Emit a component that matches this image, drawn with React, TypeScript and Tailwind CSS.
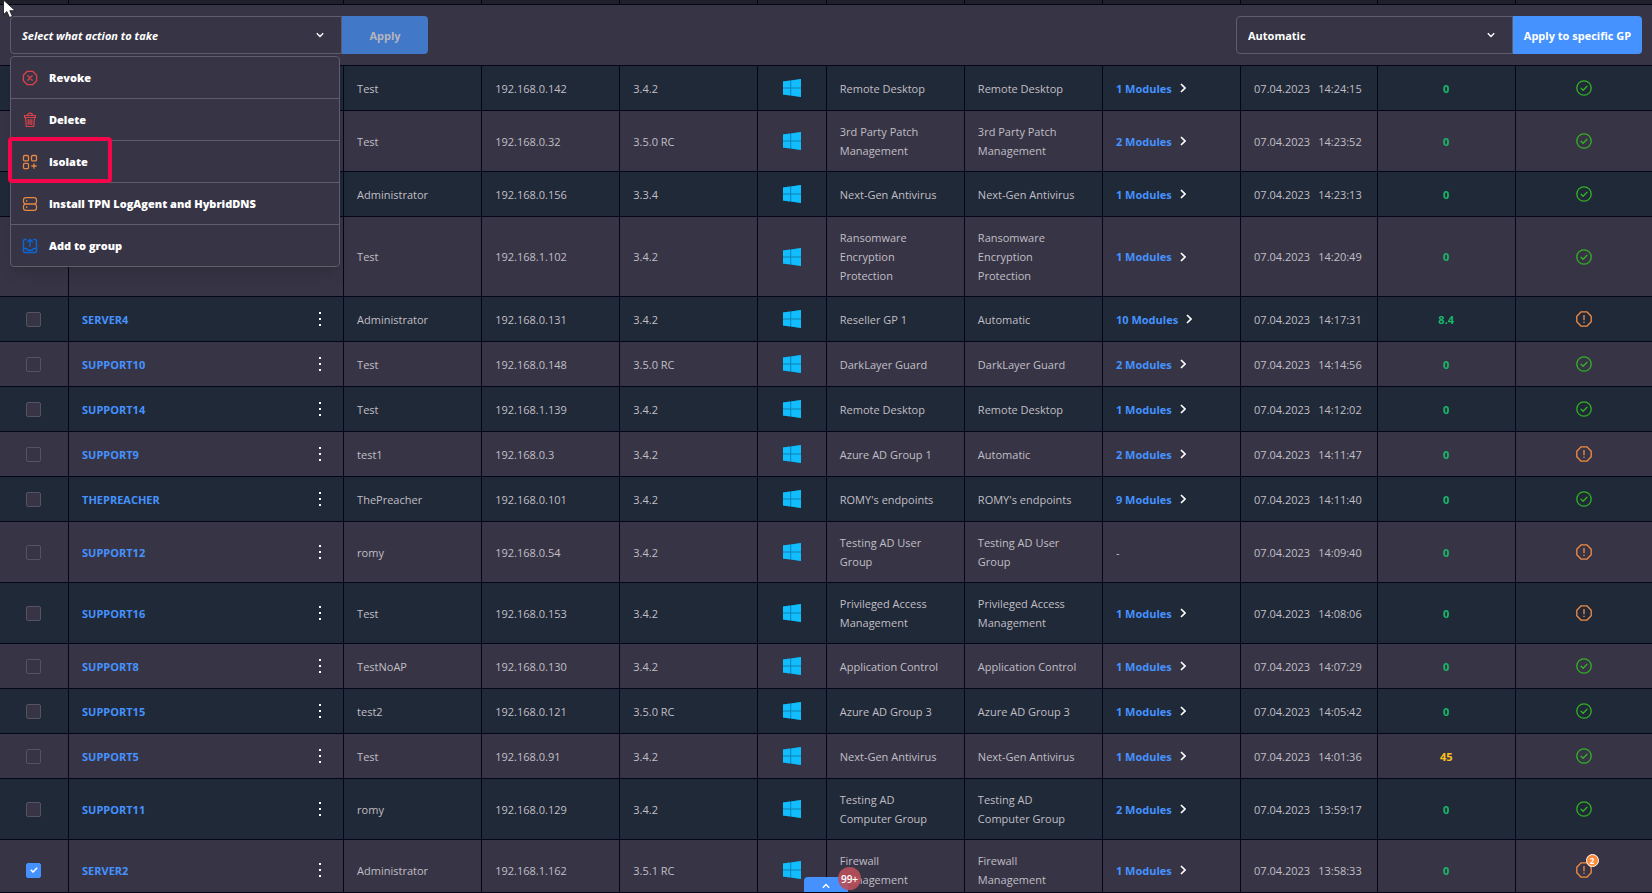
import { useState } from 'react';

type Status = 'ok' | 'warn';

type Endpoint = {
  host: string;
  user: string;
  ip: string;
  version: string;
  current: string;
  assigned: string;
  modules: number;
  time: string;
  risk: string;
  status: Status;
  alerts?: number;
};

const ENDPOINTS: Endpoint[] = [
  { host: '', user: 'Test', ip: '192.168.0.142', version: '3.4.2', current: 'Remote Desktop', assigned: 'Remote Desktop', modules: 1, time: '14:24:15', risk: '0', status: 'ok' },
  { host: '', user: 'Test', ip: '192.168.0.32', version: '3.5.0 RC', current: '3rd Party Patch Management', assigned: '3rd Party Patch Management', modules: 2, time: '14:23:52', risk: '0', status: 'ok' },
  { host: '', user: 'Administrator', ip: '192.168.0.156', version: '3.3.4', current: 'Next-Gen Antivirus', assigned: 'Next-Gen Antivirus', modules: 1, time: '14:23:13', risk: '0', status: 'ok' },
  { host: '', user: 'Test', ip: '192.168.1.102', version: '3.4.2', current: 'Ransomware Encryption Protection', assigned: 'Ransomware Encryption Protection', modules: 1, time: '14:20:49', risk: '0', status: 'ok' },
  { host: 'SERVER4', user: 'Administrator', ip: '192.168.0.131', version: '3.4.2', current: 'Reseller GP 1', assigned: 'Automatic', modules: 10, time: '14:17:31', risk: '8.4', status: 'warn' },
  { host: 'SUPPORT10', user: 'Test', ip: '192.168.0.148', version: '3.5.0 RC', current: 'DarkLayer Guard', assigned: 'DarkLayer Guard', modules: 2, time: '14:14:56', risk: '0', status: 'ok' },
  { host: 'SUPPORT14', user: 'Test', ip: '192.168.1.139', version: '3.4.2', current: 'Remote Desktop', assigned: 'Remote Desktop', modules: 1, time: '14:12:02', risk: '0', status: 'ok' },
  { host: 'SUPPORT9', user: 'test1', ip: '192.168.0.3', version: '3.4.2', current: 'Azure AD Group 1', assigned: 'Automatic', modules: 2, time: '14:11:47', risk: '0', status: 'warn' },
  { host: 'THEPREACHER', user: 'ThePreacher', ip: '192.168.0.101', version: '3.4.2', current: "ROMY's endpoints", assigned: "ROMY's endpoints", modules: 9, time: '14:11:40', risk: '0', status: 'ok' },
  { host: 'SUPPORT12', user: 'romy', ip: '192.168.0.54', version: '3.4.2', current: 'Testing AD User Group', assigned: 'Testing AD User Group', modules: 0, time: '14:09:40', risk: '0', status: 'warn' },
  { host: 'SUPPORT16', user: 'Test', ip: '192.168.0.153', version: '3.4.2', current: 'Privileged Access Management', assigned: 'Privileged Access Management', modules: 1, time: '14:08:06', risk: '0', status: 'warn' },
  { host: 'SUPPORT8', user: 'TestNoAP', ip: '192.168.0.130', version: '3.4.2', current: 'Application Control', assigned: 'Application Control', modules: 1, time: '14:07:29', risk: '0', status: 'ok' },
  { host: 'SUPPORT15', user: 'test2', ip: '192.168.0.121', version: '3.5.0 RC', current: 'Azure AD Group 3', assigned: 'Azure AD Group 3', modules: 1, time: '14:05:42', risk: '0', status: 'ok' },
  { host: 'SUPPORT5', user: 'Test', ip: '192.168.0.91', version: '3.4.2', current: 'Next-Gen Antivirus', assigned: 'Next-Gen Antivirus', modules: 1, time: '14:01:36', risk: '45', status: 'ok' },
  { host: 'SUPPORT11', user: 'romy', ip: '192.168.0.129', version: '3.4.2', current: 'Testing AD Computer Group', assigned: 'Testing AD Computer Group', modules: 2, time: '13:59:17', risk: '0', status: 'ok' },
  { host: 'SERVER2', user: 'Administrator', ip: '192.168.1.162', version: '3.5.1 RC', current: 'Firewall Management', assigned: 'Firewall Management', modules: 1, time: '13:58:33', risk: '0', status: 'warn', alerts: 2 },
];

const COLUMNS = [
  { label: 'Select', width: 'w-[4.18%]' },
  { label: 'Hostname', width: 'w-[16.65%]' },
  { label: 'Username', width: 'w-[8.36%]' },
  { label: 'IP address', width: 'w-[8.36%]' },
  { label: 'Agent version', width: 'w-[8.36%]' },
  { label: 'Operating system', width: 'w-[4.14%]' },
  { label: 'Current GP', width: 'w-[8.36%]' },
  { label: 'Assigned GP', width: 'w-[8.36%]' },
  { label: 'Modules', width: 'w-[8.36%]' },
  { label: 'Last seen', width: 'w-[8.3%]' },
  { label: 'Risk score', width: 'w-[8.36%]' },
  { label: 'Status', width: 'w-auto' },
];

function RevokeIcon() {
  return (
    <svg viewBox="0 0 16 16" className="size-4 text-[#d8434b]" fill="none" stroke="currentColor" strokeWidth="1.3" strokeLinecap="round" strokeLinejoin="round">
      <path d="M5.3 1.3h5.4l3.9 3.9v5.6l-3.9 3.9H5.3l-3.9-3.9V5.2z" />
      <path d="M5.8 5.8l4.4 4.4M10.2 5.8l-4.4 4.4" />
    </svg>
  );
}

function DeleteIcon() {
  return (
    <svg viewBox="0 0 16 16" className="size-4 text-[#d8434b]" fill="none" stroke="currentColor" strokeWidth="1.2" strokeLinecap="round" strokeLinejoin="round">
      <path d="M2.5 3.5h11v2h-11zM5.5 3.3c0-2.8 5-2.8 5 0" />
      <path d="M3.5 5.7l.8 8.8h7.4l.8-8.8M6.2 7.5v5M8 7.5v5M9.8 7.5v5" />
    </svg>
  );
}

function IsolateIcon() {
  return (
    <svg viewBox="0 0 16 16" className="size-4 text-[#e8873f]" fill="none" stroke="currentColor" strokeWidth="1.3" strokeLinecap="round">
      <rect x="1.5" y="1.5" width="5" height="5.4" rx="1.2" />
      <rect x="9.5" y="1.5" width="5" height="5.4" rx="1.2" />
      <rect x="1.5" y="9.3" width="5" height="5.4" rx="1.2" />
      <path d="M12 9.8v4.4M9.8 12h4.4" />
    </svg>
  );
}

function InstallIcon() {
  return (
    <svg viewBox="0 0 16 16" className="size-4 text-[#e8873f]" fill="none" stroke="currentColor" strokeWidth="1.2" strokeLinecap="round">
      <rect x="1.5" y="1.7" width="13" height="6.3" rx="2.4" />
      <rect x="1.5" y="8" width="13" height="6.3" rx="2.4" />
      <path d="M4.7 4.4v.9M4.7 10.7v.9" />
    </svg>
  );
}

function GroupIcon() {
  return (
    <svg viewBox="0 0 16 16" className="size-4 text-[#0b66d8]" fill="none" stroke="currentColor" strokeWidth="1.4" strokeLinecap="round" strokeLinejoin="round">
      <path d="M4.2 1.5H2.8a1.3 1.3 0 0 0-1.3 1.3v10.4a1.3 1.3 0 0 0 1.3 1.3h10.4a1.3 1.3 0 0 0 1.3-1.3V2.8a1.3 1.3 0 0 0-1.3-1.3h-1.4" />
      <path d="M8 8.5V1.4M5.6 3.7L8 1.4l2.4 2.3M1.5 10.5h3l1.3 1.7h4.4l1.3-1.7h3" />
    </svg>
  );
}

const ACTIONS = [
  { label: 'Revoke', icon: <RevokeIcon /> },
  { label: 'Delete', icon: <DeleteIcon /> },
  { label: 'Isolate', icon: <IsolateIcon />, highlighted: true },
  { label: 'Install TPN LogAgent and HybridDNS', icon: <InstallIcon /> },
  { label: 'Add to group', icon: <GroupIcon /> },
];

function Chevron({ className }: { className: string }) {
  return (
    <svg viewBox="0 0 8 6" className={className} fill="none" stroke="currentColor" strokeWidth="1.4">
      <path d="M.8 1.2L4 4.4l3.2-3.2" />
    </svg>
  );
}

function WindowsIcon() {
  return (
    <svg viewBox="0 0 18 18" className="mx-auto h-[18px] w-[18px]" role="img" aria-label="Windows">
      <path d="M0 2.6L18 0v18L0 15.4z" fill="#0f80b0" />
      <path d="M0 2.6L7.2 1.6v6.9H0zM8.2 1.4L18 0v8.5H8.2zM0 9.5h7.2v6.9L0 15.4zM8.2 9.5H18V18l-9.8-1.4z" fill="#10bdff" />
    </svg>
  );
}

function StatusIcon({ status, alerts }: { status: Status; alerts?: number }) {
  if (status === 'ok') {
    return (
      <svg viewBox="0 0 16 16" className="mx-auto size-4 text-[#33b324]" fill="none" stroke="currentColor" strokeWidth="1.3" strokeLinecap="round" strokeLinejoin="round" role="img" aria-label="Up to date">
        <circle cx="8" cy="8" r="7.2" />
        <path d="M5 8.3l2.1 2 3.9-4" />
      </svg>
    );
  }
  return (
    <div className="relative mx-auto size-4">
      <svg viewBox="0 0 16 16" className="size-4 text-[#f28d45]" fill="none" stroke="currentColor" strokeWidth="1.3" strokeLinejoin="round" role="img" aria-label="Needs attention">
        <path d="M5.2.8h5.6l4.4 4.4v5.6l-4.4 4.4H5.2L.8 10.8V5.2z" />
        <path d="M8 4v5.2M8 10.8v1.2" />
      </svg>
      {alerts ? (
        <span className="absolute -top-2 left-2.5 flex size-[13px] items-center justify-center rounded-full border border-white bg-[#ff8c3a] text-[8px] leading-none font-bold text-white">
          {alerts}
        </span>
      ) : null}
    </div>
  );
}

function ActionPicker() {
  const [open, setOpen] = useState(true);

  return (
    <div className="flex">
      <div className="relative w-[332px]">
        <button
          type="button"
          aria-haspopup="menu"
          aria-expanded={open}
          onClick={() => setOpen(!open)}
          className="flex h-[38px] w-full items-center justify-between rounded-l-sm border border-[#5f5d6c] pr-[17px] pl-[11px] font-bold text-white italic"
        >
          Select what action to take
          <Chevron className="h-1.5 w-2" />
        </button>
        {open && (
          <ul role="menu" className="absolute top-10 left-0 z-10 w-[330px] rounded-sm border border-[#5f5d6c] bg-[#373545] shadow-lg">
            {ACTIONS.map((a) => (
              <li key={a.label} role="none" className="relative border-b border-[#5f5d6c] last:border-b-0">
                <button type="button" role="menuitem" className="flex h-[41px] w-full items-center gap-[11px] px-[11px] text-left font-extrabold text-white">
                  {a.icon}
                  {a.label}
                </button>
                {a.highlighted && (
                  <span className="pointer-events-none absolute -top-1 -left-[3px] h-[46px] w-[104px] rounded border-4 border-[#f5064b]" />
                )}
              </li>
            ))}
          </ul>
        )}
      </div>
      <button type="button" className="w-[86px] rounded-r-sm bg-[#4178c8] font-bold text-[#b4b4bd]">
        Apply
      </button>
    </div>
  );
}

function PolicyPicker() {
  return (
    <div className="flex">
      <div className="relative w-[277px]">
        <select
          aria-label="Group policy"
          className="h-[38px] w-full appearance-none rounded-l-sm border border-[#5f5d6c] bg-[#373545] px-[11px] font-bold text-white"
        >
          <option>Automatic</option>
        </select>
        <Chevron className="pointer-events-none absolute top-4 right-[18px] h-1.5 w-2 text-white" />
      </div>
      <button type="button" className="w-[129px] rounded-r-sm bg-[#4592ff] font-bold whitespace-nowrap text-white">
        Apply to specific GP
      </button>
    </div>
  );
}

export default function App() {
  const [selected, setSelected] = useState<number[]>([15]);

  const toggle = (i: number) =>
    setSelected((prev) => (prev.includes(i) ? prev.filter((n) => n !== i) : [...prev, i]));

  return (
    <div className="relative h-screen overflow-hidden border-b border-[#05051a] bg-[#373545] font-['Open_Sans','Noto_Sans',sans-serif] text-[11px] leading-[19px] font-medium text-[#c0bfc6]">
      <table className="w-full table-fixed border-separate border-spacing-0">
        <colgroup>
          {COLUMNS.map((c) => (
            <col key={c.label} className={c.width} />
          ))}
        </colgroup>
        <thead>
          <tr className="h-[5px] bg-[#201f2c]">
            {COLUMNS.map((c) => (
              <th key={c.label} aria-label={c.label} className="border-r border-b border-[#05051a] p-0 last:border-r-0" />
            ))}
          </tr>
        </thead>
        <tbody>
          <tr>
            <td colSpan={12} className="border-b border-[#05051a] px-2.5 py-[11px]">
              <div className="flex justify-between">
                <ActionPicker />
                <PolicyPicker />
              </div>
            </td>
          </tr>
          {ENDPOINTS.map((e, i) => (
            <tr
              key={e.ip}
              className="h-[45px] odd:bg-[#373545] even:bg-[#202937] *:border-r *:border-b *:border-[#05051a] *:py-[11px] *:pr-3.5 *:pl-[13px] *:last:border-r-0"
            >
              <td>
                <label className="mx-auto flex size-[15px] items-center justify-center rounded-xs border border-[#55535f] bg-[#373545] has-checked:border-[#4592ff] has-checked:bg-[#4592ff]">
                  <input
                    type="checkbox"
                    aria-label={`Select ${e.host || e.ip}`}
                    checked={selected.includes(i)}
                    onChange={() => toggle(i)}
                    className="sr-only"
                  />
                  {selected.includes(i) && (
                    <svg viewBox="0 0 8 6" className="h-1.5 w-2" fill="none" stroke="#fff" strokeWidth="1.5">
                      <path d="M.8 2.8L3 5l4.2-4.2" />
                    </svg>
                  )}
                </label>
              </td>
              <td>
                <div className="flex items-center justify-between">
                  <a href="#" className="font-bold text-[#4592ff]">
                    {e.host}
                  </a>
                  <button type="button" aria-label="More actions" className="px-1.5 text-white">
                    <svg viewBox="0 0 6 14" className="h-3.5 w-1.5" fill="currentColor">
                      <path d="M2 0h2v2H2zM2 6h2v2H2zM2 12h2v2H2z" />
                    </svg>
                  </button>
                </div>
              </td>
              <td>{e.user}</td>
              <td>{e.ip}</td>
              <td>{e.version}</td>
              <td>
                <WindowsIcon />
              </td>
              <td>
                <div className="pr-2">{e.current}</div>
              </td>
              <td>
                <div className="pr-2">{e.assigned}</div>
              </td>
              <td>
                {e.modules ? (
                  <a href="#" className="flex items-center gap-2 font-bold text-[#4592ff]">
                    {e.modules} Modules
                    <svg viewBox="0 0 6 10" className="h-2.5 w-1.5 text-white" fill="none" stroke="currentColor" strokeWidth="1.7">
                      <path d="M1 1l4 4-4 4" />
                    </svg>
                  </a>
                ) : (
                  '-'
                )}
              </td>
              <td className="whitespace-nowrap">
                <span className="mr-2">07.04.2023</span>
                {e.time}
              </td>
              <td className={e.risk === '45' ? 'text-center font-bold text-[#ffc21a]' : 'text-center font-bold text-[#17b86a]'}>
                {e.risk}
              </td>
              <td>
                <StatusIcon status={e.status} alerts={e.alerts} />
              </td>
            </tr>
          ))}
        </tbody>
      </table>

      <button
        type="button"
        aria-label="Open notifications"
        className="absolute bottom-0 left-1/2 flex h-[15px] w-11 -translate-x-1/2 items-end justify-center rounded-t bg-[#4592ff] pb-[3px] text-white"
      >
        <Chevron className="h-1.5 w-2.5 rotate-180" />
        <span className="absolute -top-2.5 left-[34px] flex size-[23px] items-center justify-center rounded-full bg-[#b94f5a]/90 text-[10px] leading-none font-semibold">
          99+
        </span>
      </button>

      <svg viewBox="0 0 13 18" className="pointer-events-none absolute top-0 left-[3px] h-[18px] w-[13px]">
        <path d="M.5 0v14.6l3.4-3 2.6 5.9 2.9-1.2-2.6-5.6h5.4z" fill="#fff" stroke="#111" strokeWidth=".8" />
      </svg>
    </div>
  );
}
